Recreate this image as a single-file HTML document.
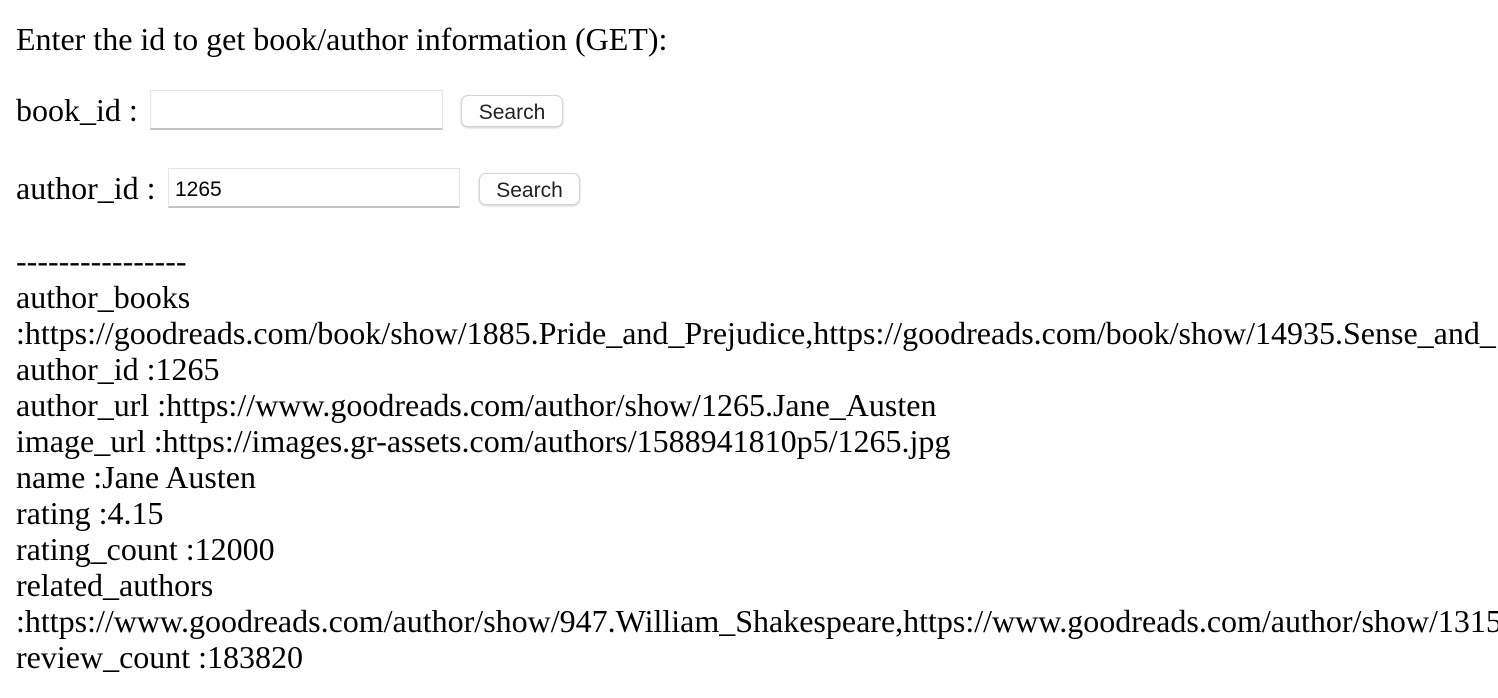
<!DOCTYPE html>
<html><head><style>
body{margin:0;width:1498px;height:698px;overflow:hidden;background:#fff;font-family:"Liberation Serif",serif;font-size:32px;color:#000;position:relative}
.t{position:absolute;left:16px;white-space:nowrap;line-height:36px}
.clip{position:absolute;left:0;top:0;width:1498px;height:698px;overflow:hidden}
.inp{position:absolute;border:1px solid #e6e6e6;border-bottom:2px solid #c4c4c4;background:#fff;box-sizing:border-box;font-family:"Liberation Sans",sans-serif;font-size:21px;padding-left:6px;line-height:41px}
.btn{position:absolute;border:1px solid #d4d4d4;border-radius:7px;background:#fff;box-shadow:0 1px 2px rgba(0,0,0,.2);box-sizing:border-box;font-family:"Liberation Sans",sans-serif;font-size:21px;text-align:center;line-height:33px;color:#222}
</style></head><body><div class="clip">
<div class="t" style="top:21px">Enter the id to get book/author information (GET):</div>
<div class="t" style="top:92px">book_id :</div>
<div class="inp" style="left:150px;top:90px;width:293px;height:40px"></div>
<div class="btn" style="left:461px;top:95px;width:102px;height:32px">Search</div>
<div class="t" style="top:170px">author_id :</div>
<div class="inp" style="left:168px;top:168px;width:292px;height:40px">1265</div>
<div class="btn" style="left:479px;top:173px;width:101px;height:32px">Search</div>
<div class="t" style="top:243px">----------------<br>author_books<br>:https://goodreads.com/book/show/1885.Pride_and_Prejudice,https://goodreads.com/book/show/14935.Sense_and_Sensibility<br>author_id :1265<br>author_url :https://www.goodreads.com/author/show/1265.Jane_Austen<br>image_url :https://images.gr-assets.com/authors/1588941810p5/1265.jpg<br>name :Jane Austen<br>rating :4.15<br>rating_count :12000<br>related_authors<br>:https://www.goodreads.com/author/show/947.William_Shakespeare,https://www.goodreads.com/author/show/1315<br>review_count :183820</div>
</div></body></html>
